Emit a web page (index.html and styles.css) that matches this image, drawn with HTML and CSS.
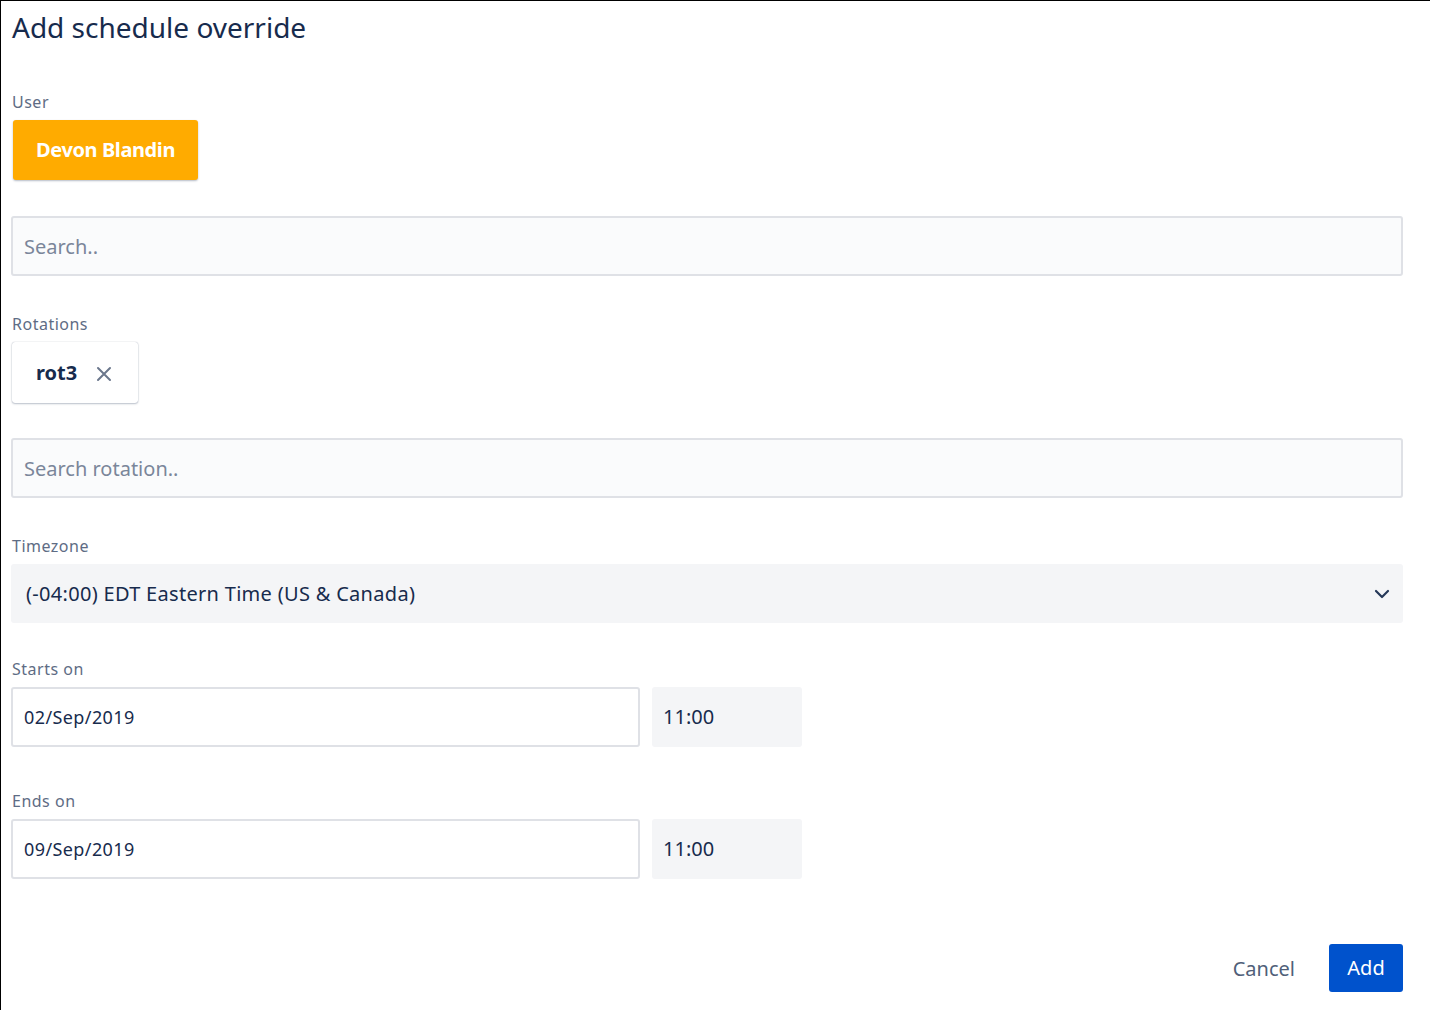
FILE: index.html
```html
<!DOCTYPE html>
<html>
<head>
<meta charset="utf-8">
<link rel="stylesheet" href="styles.css">
</head>
<body>
<div class="dialog">
  <h1 class="title">Add schedule override</h1>

  <div class="field field-user">
    <div class="label">User</div>
    <div class="user-chip">Devon Blandin</div>
  </div>
  <div class="input search search-user">Search..</div>

  <div class="field field-rot">
    <div class="label">Rotations</div>
    <div class="rot-chip"><span class="rot-name">rot3</span>
      <svg class="x-icon" width="16" height="16" viewBox="0 0 16 16"><path d="M2 2 L14 14 M14 2 L2 14" stroke="#6b778c" stroke-width="2" stroke-linecap="round"/></svg>
    </div>
  </div>
  <div class="input search search-rot">Search rotation..</div>

  <div class="field field-tz">
    <div class="label">Timezone</div>
    <div class="select"><span>(-04:00) EDT Eastern Time (US &amp; Canada)</span>
      <svg width="16" height="10" viewBox="0 0 16 10"><path d="M2 2 L8 8 L14 2" stroke="#253858" stroke-width="2.2" fill="none" stroke-linecap="round" stroke-linejoin="round"/></svg>
    </div>
  </div>

  <div class="field field-start">
    <div class="label">Starts on</div>
    <div class="datetime">
      <div class="date">02/Sep/2019</div>
      <div class="time">11:00</div>
    </div>
  </div>

  <div class="field field-end">
    <div class="label">Ends on</div>
    <div class="datetime">
      <div class="date">09/Sep/2019</div>
      <div class="time">11:00</div>
    </div>
  </div>

  <div class="actions">
    <span class="cancel">Cancel</span>
    <span class="add">Add</span>
  </div>
</div>
</body>
</html>
```
FILE: styles.css
```css
* { box-sizing: border-box; }
html, body { margin: 0; padding: 0; background: #fff; }
body {
  font-family: "Noto Sans", "Open Sans", sans-serif;
  color: #172b4d;
  width: 1430px;
  height: 1010px;
  overflow: hidden;
}
.dialog {
  border-left: 1px solid #000;
  border-top: 1px solid #000;
  height: 1010px;
  padding: 0 27px 0 10px;
}
.title {
  margin: 0;
  padding-top: 7px;
  font-size: 28px;
  line-height: 38px;
  font-weight: 400;
  color: #172b4d;
  padding-left: 1px;
}
.label {
  font-size: 16px;
  line-height: 20px;
  letter-spacing: 0.5px;
  color: #5e6c84;
  margin-bottom: 8px;
  padding-left: 1px;
}
.field-user { margin-top: 46px; }
.user-chip {
  display: inline-block;
  margin-left: 2px;
  width: 185px;
  height: 60px;
  line-height: 60px;
  text-align: center;
  background: #ffab00;
  color: #fff;
  font-weight: 700;
  font-size: 20px;
  letter-spacing: -0.4px;
  border-radius: 3px;
  box-shadow: 0 1px 2px rgba(9,30,66,0.3);
}
.input {
  height: 60px;
  border: 2px solid #dfe1e6;
  border-radius: 3px;
  background: #fafbfc;
  font-size: 20px;
  line-height: 58px;
  padding-left: 11px;
  color: #7a869a;
}
.search-user { margin-top: 36px; }
.search-rot { margin-top: 35px; }
.field-rot { margin-top: 38px; }
.rot-chip {
  display: inline-flex;
  align-items: center;
  margin-left: 1px;
  width: 126px;
  height: 61px;
  padding-left: 24px;
  background: #fff;
  border-radius: 3px;
  box-shadow: 0 0 1px rgba(9,30,66,0.35), 0 1px 2px rgba(9,30,66,0.25);
}
.rot-name { font-size: 20px; font-weight: 700; color: #172b4d; }
.x-icon { margin-left: 19px; margin-top: 2px; }
.field-tz { margin-top: 38px; }
.select {
  height: 59px;
  background: #f4f5f7;
  border-radius: 3px;
  display: flex;
  align-items: center;
  justify-content: space-between;
  padding: 0 13px 0 15px;
  font-size: 20px;
  letter-spacing: 0.3px;
  color: #172b4d;
}
.field-start { margin-top: 36px; }
.field-end { margin-top: 44px; }
.datetime { display: flex; gap: 12px; }
.date {
  width: 629px;
  height: 60px;
  border: 2px solid #dfe1e6;
  border-radius: 3px;
  background: #fff;
  font-size: 18px;
  letter-spacing: 0.4px;
  line-height: 56px;
  padding-left: 11px;
  color: #172b4d;
}
.time {
  width: 150px;
  height: 60px;
  background: #f4f5f7;
  border-radius: 3px;
  font-size: 20px;
  line-height: 60px;
  padding-left: 11px;
  color: #172b4d;
}
.actions {
  margin-top: 65px;
  display: flex;
  justify-content: flex-end;
  align-items: center;
  gap: 34px;
}
.cancel { font-size: 20px; color: #505f79; }
.add {
  width: 74px;
  height: 48px;
  line-height: 48px;
  text-align: center;
  background: #0052cc;
  color: #fff;
  font-size: 20px;
  border-radius: 3px;
}
```
